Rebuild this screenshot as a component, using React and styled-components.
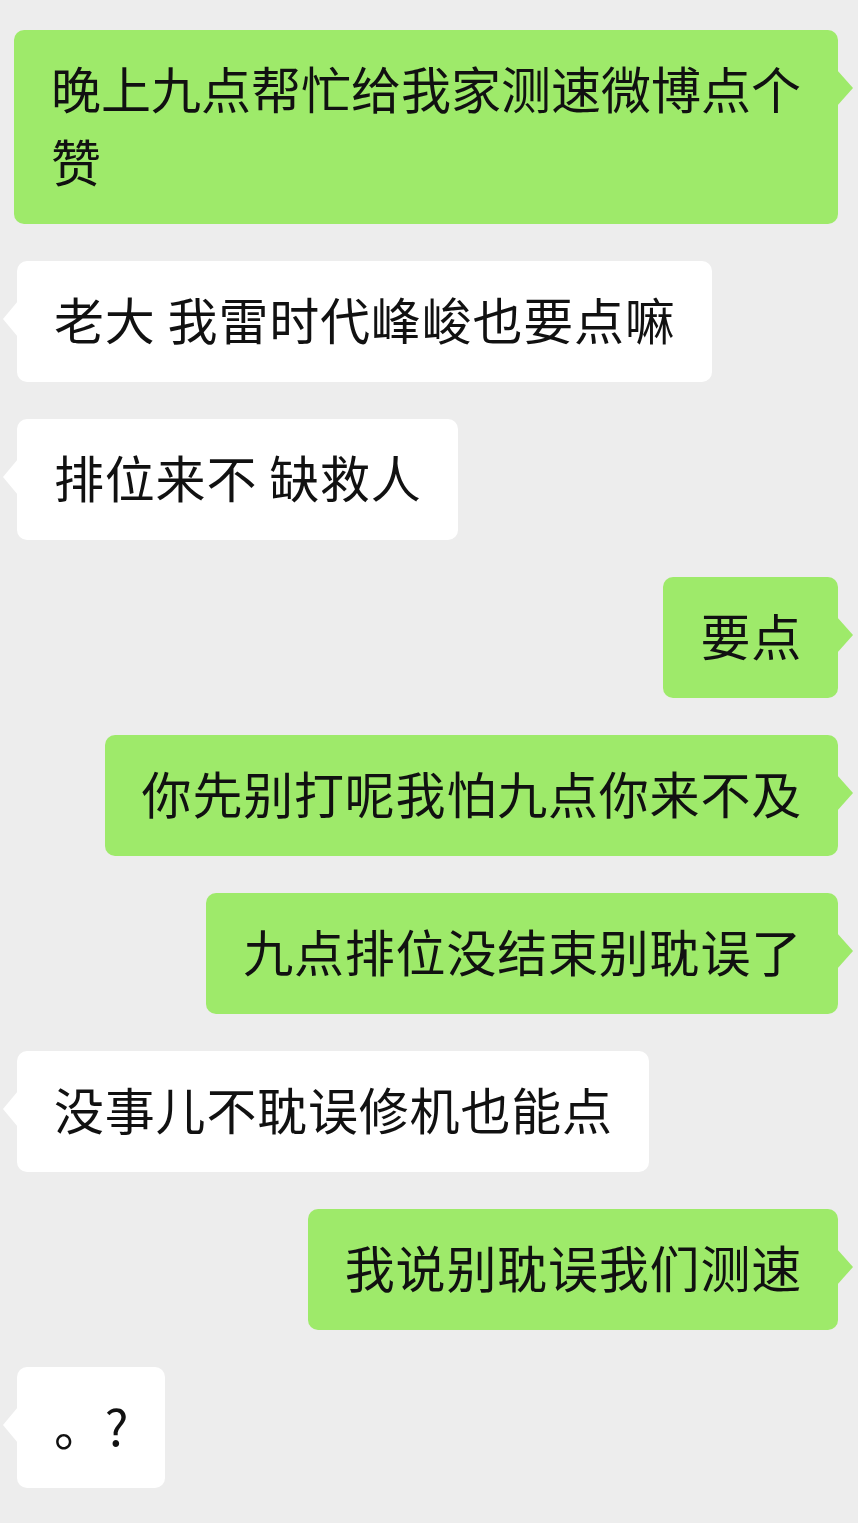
import React from "react";
import styled, { createGlobalStyle, css } from "styled-components";

const GlobalStyle = createGlobalStyle`
  html, body {
    margin: 0;
    padding: 0;
    background-color: #ededed;
  }
  body {
    font-family: "Noto Sans CJK SC", "Noto Sans", sans-serif;
    -webkit-font-smoothing: antialiased;
  }
`;

const Chat = styled.div`
  min-height: 1523px;
  box-sizing: border-box;
  padding: 30px 20px 30px 17px;
  display: flex;
  flex-direction: column;
  gap: 37px;
  background-color: #ededed;
`;

const Row = styled.div`
  display: flex;
  justify-content: ${(p) => (p.$mine ? "flex-end" : "flex-start")};
`;

const Bubble = styled.div`
  position: relative;
  box-sizing: border-box;
  max-width: 824px;
  ${(p) => p.$mine && "margin-left: -3px;"}
  padding: 21px 36px 27px 37px;
  border-radius: 10px;
  background-color: ${(p) => (p.$mine ? "#9eea6a" : "#ffffff")};
  color: #111111;
  font-size: 50px;
  line-height: 73px;
  letter-spacing: ${(p) => (p.$tight ? "0" : "0.8px")};
  word-break: break-all;
  white-space: pre-wrap;

  &::before {
    content: "";
    position: absolute;
    top: 40px;
    width: 0;
    height: 0;
    border-top: 18px solid transparent;
    border-bottom: 18px solid transparent;
    ${(p) =>
      p.$mine
        ? css`
            right: -15px;
            border-left: 16px solid #9eea6a;
          `
        : css`
            left: -14px;
            border-right: 15px solid #ffffff;
          `}
  }
`;

const messages = [
  { mine: true, tight: true, text: "晚上九点帮忙给我家测速微博点个赞" },
  { mine: false, text: "老大 我雷时代峰峻也要点嘛" },
  { mine: false, text: "排位来不 缺救人" },
  { mine: true, text: "要点" },
  { mine: true, text: "你先别打呢我怕九点你来不及" },
  { mine: true, text: "九点排位没结束别耽误了" },
  { mine: false, text: "没事儿不耽误修机也能点" },
  { mine: true, text: "我说别耽误我们测速" },
  { mine: false, text: "。?" },
];

export default function App() {
  return (
    <>
      <GlobalStyle />
      <Chat>
        {messages.map((m, i) => (
          <Row key={i} $mine={m.mine}>
            <Bubble $mine={m.mine} $tight={m.tight}>
              {m.text}
            </Bubble>
          </Row>
        ))}
      </Chat>
    </>
  );
}
